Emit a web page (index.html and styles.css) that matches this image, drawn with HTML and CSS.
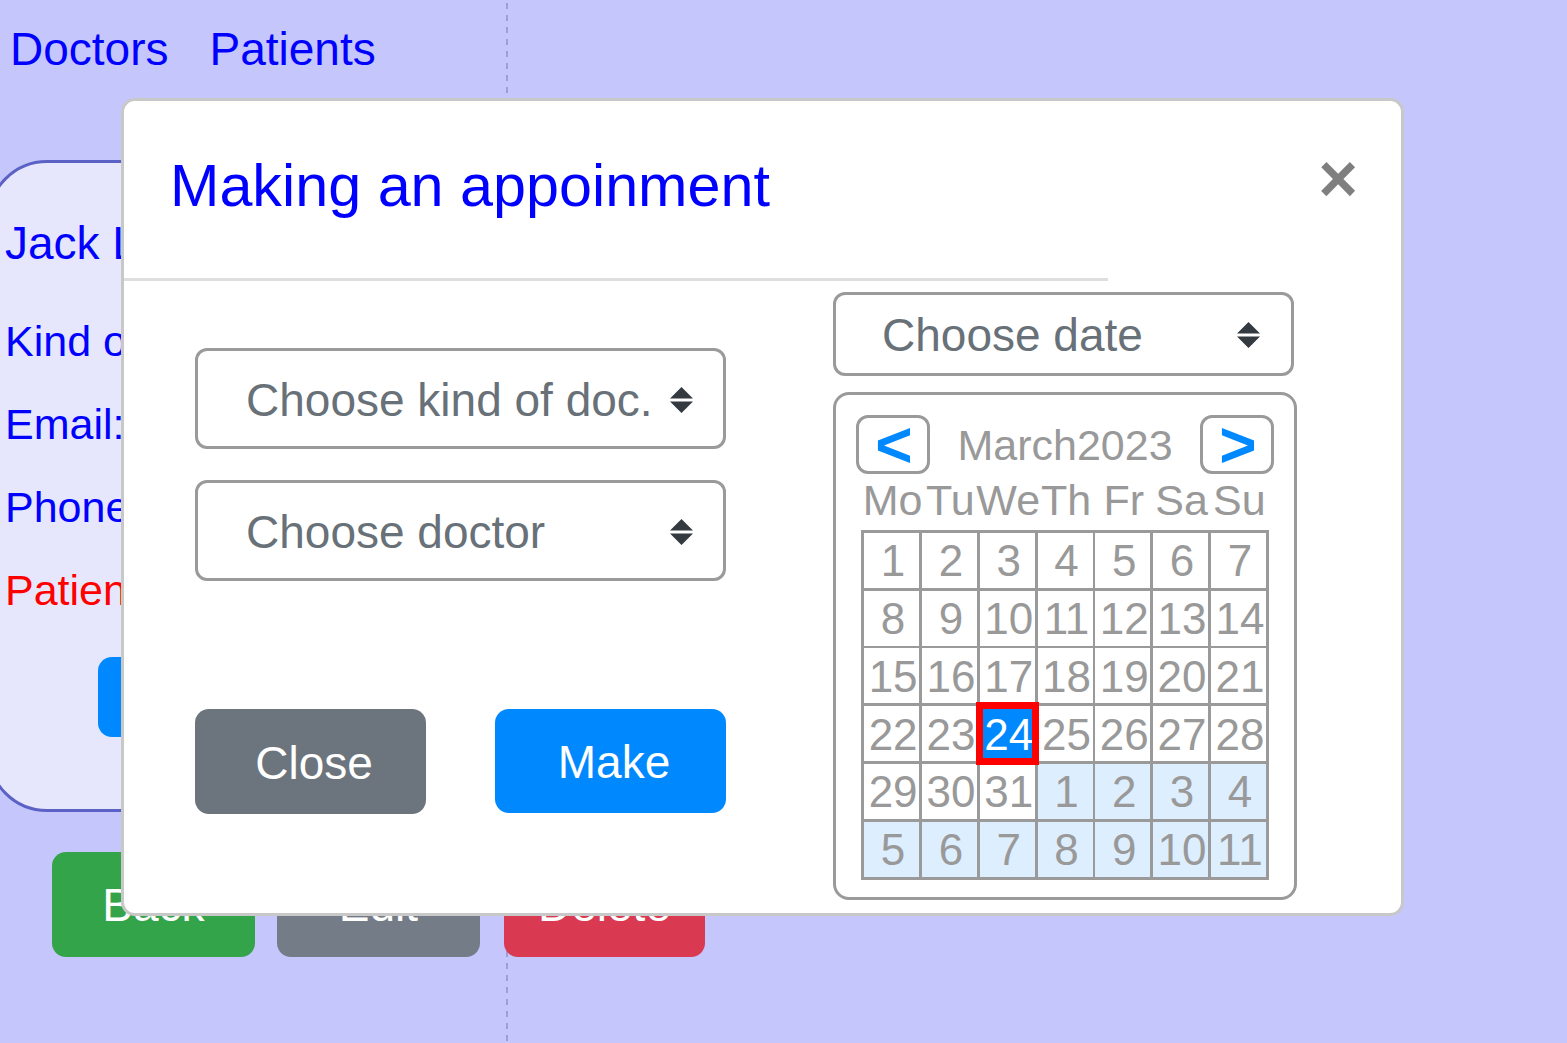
FILE: index.html
```html
<!DOCTYPE html>
<html lang="en">
<head>
<meta charset="utf-8">
<title>Making an appointment</title>
<link rel="stylesheet" href="styles.css">
</head>
<body>
<div class="page">
  <nav class="nav">
    <a class="nav-link">Doctors</a>
    <a class="nav-link">Patients</a>
  </nav>
  <section class="card">
    <h2 class="card-name">Jack Lee</h2>
    <p class="card-line">Kind of doc</p>
    <p class="card-line">Email: jack</p>
    <p class="card-line">Phone: 555</p>
    <p class="card-line card-warn">Patients</p>
    <button class="card-btn">Book</button>
  </section>
  <div class="actions">
    <button class="act act-green">Back</button>
    <button class="act act-gray">Edit</button>
    <button class="act act-red">Delete</button>
  </div>
</div>

<div class="modal">
  <div class="modal-header">
    <h5 class="modal-title">Making an appoinment</h5>
    <button class="modal-close">&times;</button>
  </div>
  <div class="modal-sep"></div>
  <div class="modal-body">
    <div class="col-left">
      <div class="select select-lg">
        <span>Choose kind of doc.</span>
        <svg class="sel-arrow" viewBox="0 0 23 26" width="23" height="26"><path d="M11.5 0L0 11.5H23Z M11.5 26L0 14.5H23Z"/></svg>
      </div>
      <div class="select select-lg">
        <span>Choose doctor</span>
        <svg class="sel-arrow" viewBox="0 0 23 26" width="23" height="26"><path d="M11.5 0L0 11.5H23Z M11.5 26L0 14.5H23Z"/></svg>
      </div>
      <div class="modal-actions">
        <button class="mbtn mbtn-close">Close</button>
        <button class="mbtn mbtn-make">Make</button>
      </div>
    </div>
    <div class="col-right">
      <div class="select select-date">
        <span>Choose date</span>
        <svg class="sel-arrow" viewBox="0 0 23 26" width="23" height="26"><path d="M11.5 0L0 11.5H23Z M11.5 26L0 14.5H23Z"/></svg>
      </div>
      <div class="calendar">
        <div class="cal-nav">
          <button class="cal-arrow">&lt;</button>
          <span class="cal-month">March2023</span>
          <button class="cal-arrow">&gt;</button>
        </div>
        <div class="cal-week">
          <span>Mo</span><span>Tu</span><span>We</span><span>Th</span><span>Fr</span><span>Sa</span><span>Su</span>
        </div>
        <div class="cal-grid">
          <span class="day">1</span><span class="day">2</span><span class="day">3</span><span class="day">4</span><span class="day">5</span><span class="day">6</span><span class="day">7</span>
          <span class="day">8</span><span class="day">9</span><span class="day">10</span><span class="day">11</span><span class="day">12</span><span class="day">13</span><span class="day">14</span>
          <span class="day">15</span><span class="day">16</span><span class="day">17</span><span class="day">18</span><span class="day">19</span><span class="day">20</span><span class="day">21</span>
          <span class="day">22</span><span class="day">23</span><span class="day sel">24</span><span class="day">25</span><span class="day">26</span><span class="day">27</span><span class="day">28</span>
          <span class="day">29</span><span class="day">30</span><span class="day">31</span><span class="day next">1</span><span class="day next">2</span><span class="day next">3</span><span class="day next">4</span>
          <span class="day next">5</span><span class="day next">6</span><span class="day next">7</span><span class="day next">8</span><span class="day next">9</span><span class="day next">10</span><span class="day next">11</span>
        </div>
      </div>
    </div>
  </div>
</div>
</body>
</html>
```

FILE: styles.css
```css
* { box-sizing: border-box; }

html, body {
  margin: 0;
  padding: 0;
}

body {
  font-family: "Liberation Sans", Arial, sans-serif;
  background: #c4c6fc;
  width: 1567px;
  height: 1043px;
  overflow: hidden;
  position: relative;
}

.page {
  min-height: 1043px;
  padding-top: 22px;
  background-image: repeating-linear-gradient(to bottom, #9c9ed6 0 6px, transparent 6px 12px);
  background-size: 2px 100%;
  background-position: 506px 3px;
  background-repeat: no-repeat;
}

/* nav */
.nav {
  display: flex;
  gap: 41px;
  padding-left: 10px;
  font-size: 46px;
}
.nav-link { color: #0000ff; }

/* background card */
.card {
  margin: 84px 0 0 -13px;
  width: 640px;
  height: 652px;
  background: #e6e7fc;
  border: 3px solid #5c62c5;
  border-radius: 60px;
  padding: 53px 0 0 15px;
  color: #0000ff;
  white-space: nowrap;
}
.card-name {
  margin: 0 0 47px;
  font-size: 46px;
  font-weight: normal;
}
.card-line {
  margin: 0 0 34px;
  font-size: 43px;
}
.card-warn { color: #ff0000; }
.card-btn {
  margin: 8px 0 0 93px;
  width: 160px;
  height: 80px;
  border: 0;
  border-radius: 14px;
  background: #0088ff;
  color: #fff;
  font: 40px "Liberation Sans", Arial, sans-serif;
}

.actions {
  display: flex;
  gap: 22px;
  margin-top: 40px;
  padding-left: 52px;
}
.act {
  width: 203px;
  height: 105px;
  border: 0;
  border-radius: 14px;
  color: #fff;
  font: 46px "Liberation Sans", Arial, sans-serif;
}
.act-green { background: #34a44b; }
.act-gray { background: #737c87; }
.act-red { background: #d93a52; width: 201px; margin-left: 2px; }

/* modal */
.modal {
  position: absolute;
  left: 121px;
  top: 98px;
  width: 1283px;
  height: 818px;
  background: #fff;
  border: 3px solid #c8c8c8;
  border-radius: 14px;
}
.modal-header {
  display: flex;
  justify-content: space-between;
  align-items: flex-start;
  padding: 50px 43px 58px 46px;
}
.modal-title {
  margin: 0;
  font-size: 59.3px;
  font-weight: normal;
  color: #0000ff;
}
.modal-close {
  margin-top: -7px;
  padding: 0;
  border: 0;
  background: none;
  font: bold 68px/1 "Liberation Sans", Arial, sans-serif;
  color: rgba(0, 0, 0, 0.5);
}
.modal-sep {
  width: 984px;
  height: 3px;
  background: #dedede;
}
.modal-body {
  display: flex;
  gap: 107px;
  padding: 11px 0 0 71px;
}

.col-left {
  width: 531px;
  padding-top: 56px;
  display: flex;
  flex-direction: column;
}
.select {
  display: flex;
  align-items: center;
  justify-content: space-between;
  border: 3px solid #9a9a9a;
  border-radius: 12px;
  background: #fff;
  font-size: 46px;
  color: #687078;
}
.sel-arrow { fill: #343a40; flex: none; }
.select-lg {
  height: 101px;
  padding: 3px 30px 0 48px;
}
.select-lg + .select-lg { margin-top: 31px; }

.modal-actions {
  display: flex;
  justify-content: space-between;
  margin-top: 128px;
}
.mbtn {
  width: 231px;
  height: 104px;
  border: 0;
  border-radius: 14px;
  padding: 2px 0 0 7px;
  color: #fff;
  font: 46px "Liberation Sans", Arial, sans-serif;
}
.mbtn-close { background: #6c757d; height: 105px; }
.mbtn-make { background: #0088ff; }

.col-right { width: 464px; }
.select-date {
  width: 461px;
  height: 84px;
  padding: 1px 31px 0 46px;
}

.calendar {
  margin-top: 16px;
  border: 3px solid #9a9a9a;
  border-radius: 16px;
  padding: 20px 20px 17px;
}
.cal-nav {
  display: flex;
  justify-content: space-between;
  align-items: center;
}
.cal-arrow {
  width: 74px;
  height: 59px;
  padding: 0 0 0 2px;
  border: 3px solid #9a9a9a;
  border-radius: 12px;
  background: #fff;
  color: #0088ff;
  font: bold 64px/1 "Liberation Sans", Arial, sans-serif;
  display: flex;
  align-items: center;
  justify-content: center;
}
.cal-month {
  font-size: 43px;
  color: #999;
  padding-top: 2px;
}
.cal-week {
  display: grid;
  grid-template-columns: repeat(7, 55px);
  column-gap: 2.8px;
  padding: 0 2.8px;
  width: fit-content;
  margin: 2px auto 0;
  font-size: 43px;
  color: #999;
}
.cal-week span {
  display: flex;
  justify-content: center;
  white-space: nowrap;
  padding-left: 2px;
}
.cal-grid {
  display: grid;
  grid-template-columns: repeat(7, 55px);
  grid-auto-rows: 55px;
  gap: 2.8px;
  padding: 2.8px;
  background: #9a9a9a;
  width: fit-content;
  margin: 5px auto 0;
}
.day {
  display: flex;
  align-items: center;
  justify-content: center;
  padding: 2px 0 0 3px;
  background: #fff;
  font-size: 44px;
  color: #999;
}
.day.next { background: #ddeeff; }
.day.sel {
  position: relative;
  background: #0088ff;
  color: #fff;
  outline: 7px solid #ff0000;
  outline-offset: -3px;
}
```
